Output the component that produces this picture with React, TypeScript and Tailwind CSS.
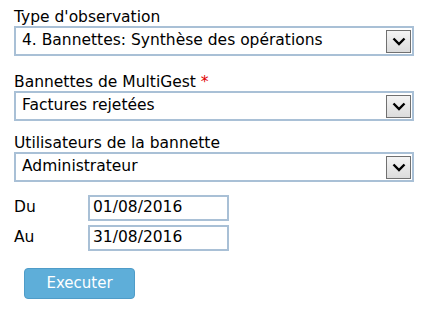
import React from "react";

const font = { fontFamily: '"DejaVu Sans", Verdana, sans-serif' };

function Chevron() {
  return (
    <div className="w-[25px] h-[23px] border border-[#707070] bg-gradient-to-b from-[#f4f4f4] to-[#dcdcdc] flex items-center justify-center">
      <svg width="14" height="9" viewBox="0 0 14 9">
        <path d="M1.5 1.5 L7 7 L12.5 1.5" fill="none" stroke="#000" strokeWidth="2.4" />
      </svg>
    </div>
  );
}

function Select({ value }: { value: string }) {
  return (
    <div className="w-[400px] h-[30px] border-2 border-[#a9c0d6] bg-white flex items-center justify-between pl-[6px] pr-[1px]">
      <span className="text-[15.5px] text-black leading-none">{value}</span>
      <Chevron />
    </div>
  );
}

export default function App() {
  return (
    <div className="w-[433px] h-[311px] bg-white text-black pl-[14px] pt-[8px]" style={font}>
      <div className="text-[15.5px] leading-[18px]">Type d'observation</div>
      <Select value="4. Bannettes: Synthèse des opérations" />
      <div className="text-[15.5px] leading-[18px] mt-[17px]">
        Bannettes de MultiGest <span className="text-[#e00000]">*</span>
      </div>
      <Select value="Factures rejetées" />
      <div className="text-[15.5px] leading-[18px] mt-[13px]">Utilisateurs de la bannette</div>
      <Select value="Administrateur" />
      <div className="mt-[13px] flex flex-col gap-[4px]">
        <div className="flex items-center">
          <span className="w-[74px] text-[15.5px]">Du</span>
          <div className="w-[141px] h-[26px] border-2 border-[#a9c0d6] flex items-center pl-[3px] text-[15.5px]">01/08/2016</div>
        </div>
        <div className="flex items-center">
          <span className="w-[74px] text-[15.5px]">Au</span>
          <div className="w-[141px] h-[26px] border-2 border-[#a9c0d6] flex items-center pl-[3px] text-[15.5px]">31/08/2016</div>
        </div>
      </div>
      <div className="mt-[17px] ml-[10px] w-[111px] h-[31px] rounded-[4px] bg-[#5eaed9] border border-[#4f9cc8] text-white text-[15px] flex items-center justify-center">
        Executer
      </div>
    </div>
  );
}
